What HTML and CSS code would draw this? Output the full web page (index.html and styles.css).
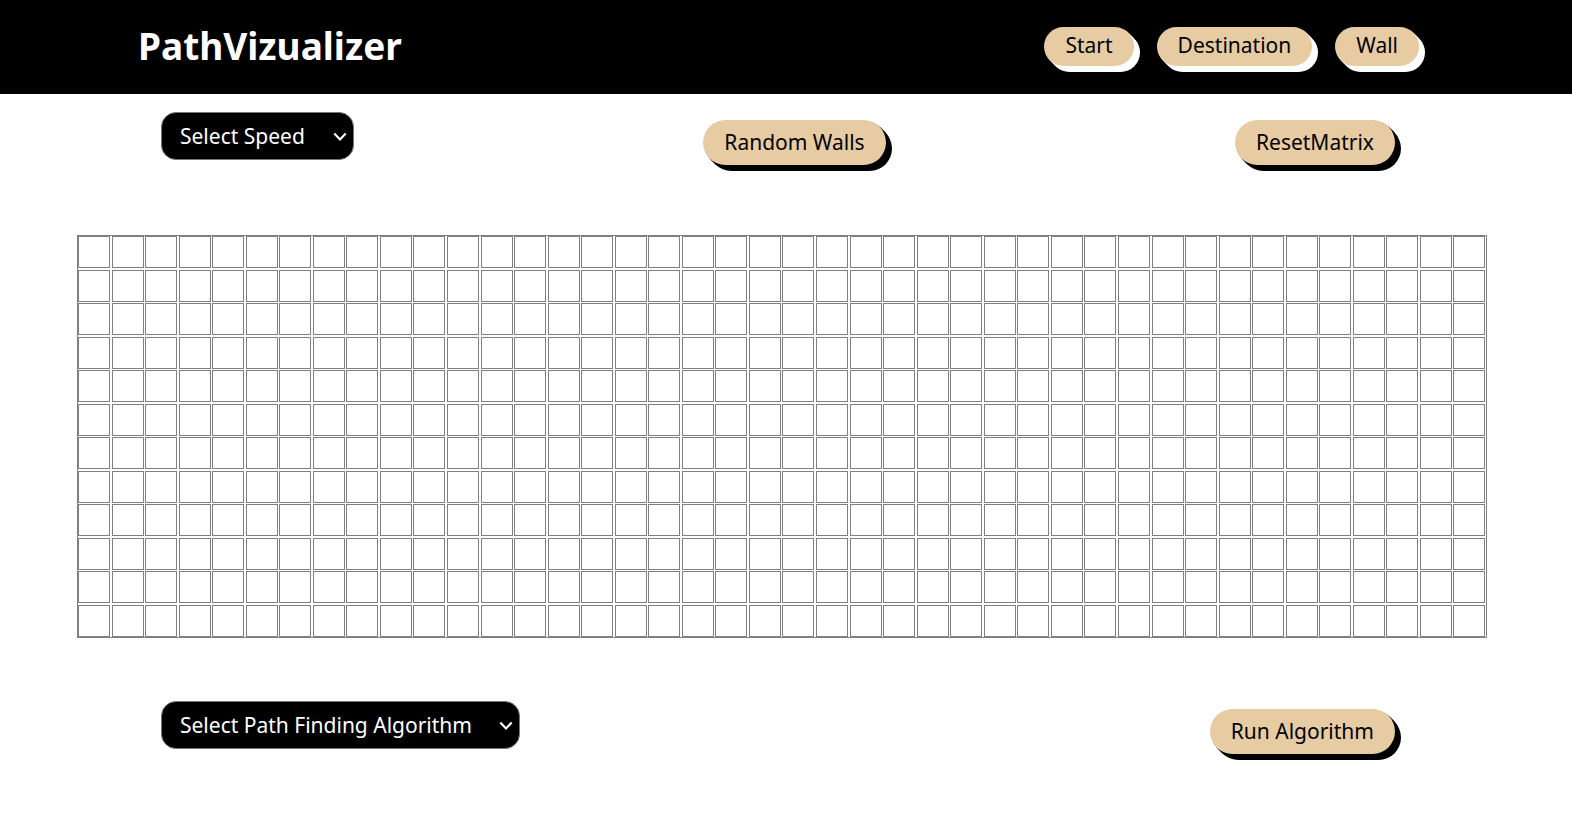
FILE: index.html
```html
<!DOCTYPE html>
<html lang="en">
<head>
<meta charset="utf-8">
<title>PathVizualizer</title>
<link rel="stylesheet" href="styles.css">
</head>
<body>
<header class="header">
  <h1 class="brand">PathVizualizer</h1>
  <nav class="nav" aria-label="Cell type">
    <button type="button" class="btn btn-nav">Start</button>
    <button type="button" class="btn btn-nav">Destination</button>
    <button type="button" class="btn btn-nav">Wall</button>
  </nav>
</header>
<main class="main">
  <div class="toolbar">
    <div class="select-wrap">
      <select class="select" aria-label="Speed">
        <option>Select Speed</option>
        <option>Slow</option>
        <option>Fast</option>
      </select>
      <svg class="chevron" viewBox="0 0 14 10" aria-hidden="true"><path d="M1.3 1.5 7 7.4 12.7 1.5"/></svg>
    </div>
    <button type="button" class="btn">Random Walls</button>
    <button type="button" class="btn">ResetMatrix</button>
  </div>
  <div class="board" id="board"></div>
  <div class="toolbar toolbar-bottom">
    <div class="select-wrap select-wide">
      <select class="select" aria-label="Path finding algorithm">
        <option>Select Path Finding Algorithm</option>
        <option>Dijkstra</option>
      </select>
      <svg class="chevron" viewBox="0 0 14 10" aria-hidden="true"><path d="M1.3 1.5 7 7.4 12.7 1.5"/></svg>
    </div>
    <button type="button" class="btn">Run Algorithm</button>
  </div>
</main>
<script src="script.js"></script>
</body>
</html>
```
FILE: styles.css
```css
* {
  box-sizing: border-box;
}

body {
  margin: 0;
  background: #fff;
  color: #000;
  font-family: "Noto Sans", "Open Sans", sans-serif;
}

.header {
  display: flex;
  align-items: center;
  justify-content: space-between;
  min-height: 94px;
  padding: 0 153px 2px 138px;
  background: #000;
}

.brand {
  margin: 0;
  color: #fff;
  font-size: 37px;
  line-height: 48px;
}

.nav {
  display: flex;
  gap: 23px;
}

.btn {
  --shadow: #000;
  height: 45px;
  padding: 0 21px 2px;
  border: 0;
  border-radius: 23px;
  background: #e7cba3;
  box-shadow:
    1px 1px 0 var(--shadow),
    2px 2px 0 var(--shadow),
    3px 3px 0 var(--shadow),
    4px 4px 0 var(--shadow),
    5px 5px 0 var(--shadow),
    6px 6px 0 var(--shadow);
  color: #000;
  font-family: inherit;
  font-size: 21px;
  line-height: 28px;
}

.btn-nav {
  --shadow: #fff;
  height: 39px;
  border-radius: 20px;
}

.main {
  padding-bottom: 48px;
}

.toolbar {
  display: flex;
  align-items: flex-start;
  justify-content: space-between;
  padding: 18px 177px 0 161px;
}

.toolbar .btn {
  margin-top: 8px;
}

.toolbar-bottom {
  padding-top: 63px;
}

.select-wrap {
  position: relative;
  width: 193px;
}

.select-wide {
  width: 359px;
}

.select {
  appearance: none;
  display: block;
  width: 100%;
  height: 48px;
  padding: 0 18px;
  border: 1px solid #767676;
  border-radius: 15px;
  background: #000;
  color: #fff;
  font-family: inherit;
  font-size: 21px;
}

.chevron {
  position: absolute;
  top: 20px;
  right: 7px;
  width: 14px;
  height: 10px;
  fill: none;
  stroke: #fff;
  stroke-width: 2.2;
  pointer-events: none;
}

.board {
  display: grid;
  grid-template-columns: repeat(42, 32px);
  grid-auto-rows: 32px;
  align-content: space-between;
  justify-content: space-between;
  height: 403px;
  margin: 70px 85px 0 77px;
  border: 1px solid #808080;
}

.cell {
  border: 1px solid #808080;
}
```
FILE: script.js
```js
const board = document.getElementById("board");
const ROWS = 12;
const COLUMNS = 42;

for (let i = 0; i < ROWS * COLUMNS; i++) {
  const cell = document.createElement("div");
  cell.className = "cell";
  board.appendChild(cell);
}
```
